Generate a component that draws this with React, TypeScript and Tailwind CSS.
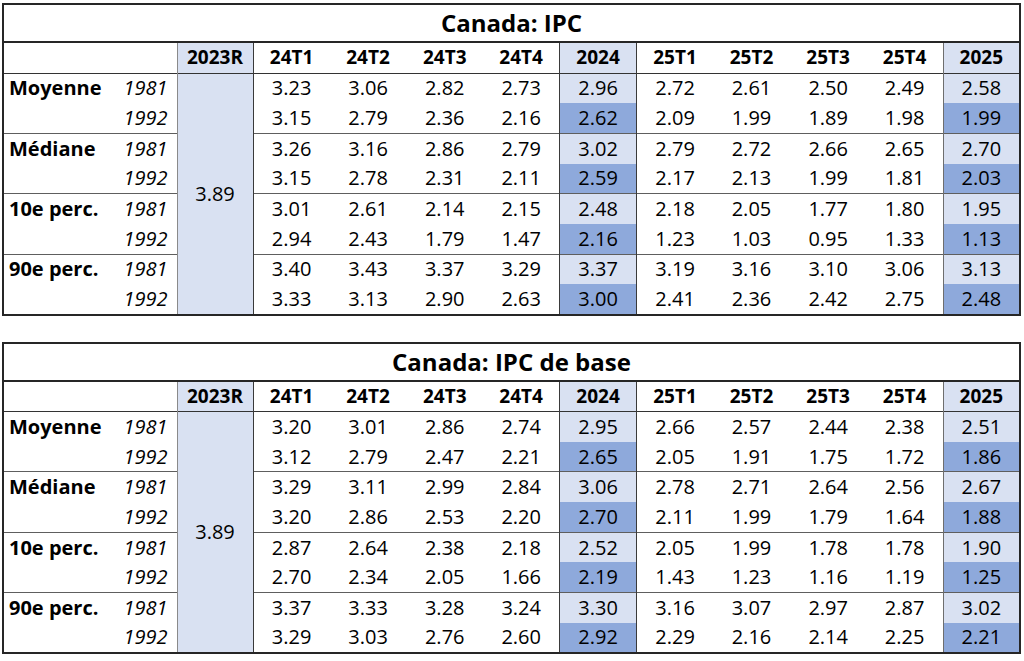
const cols = ["24T1", "24T2", "24T3", "24T4", "2024", "25T1", "25T2", "25T3", "25T4", "2025"];

type Group = { label: string; r1981: string[]; r1992: string[] };

const tables: { title: string; base: string; groups: Group[] }[] = [
  {
    title: "Canada: IPC",
    base: "3.89",
    groups: [
      {
        label: "Moyenne",
        r1981: ["3.23", "3.06", "2.82", "2.73", "2.96", "2.72", "2.61", "2.50", "2.49", "2.58"],
        r1992: ["3.15", "2.79", "2.36", "2.16", "2.62", "2.09", "1.99", "1.89", "1.98", "1.99"],
      },
      {
        label: "Médiane",
        r1981: ["3.26", "3.16", "2.86", "2.79", "3.02", "2.79", "2.72", "2.66", "2.65", "2.70"],
        r1992: ["3.15", "2.78", "2.31", "2.11", "2.59", "2.17", "2.13", "1.99", "1.81", "2.03"],
      },
      {
        label: "10e perc.",
        r1981: ["3.01", "2.61", "2.14", "2.15", "2.48", "2.18", "2.05", "1.77", "1.80", "1.95"],
        r1992: ["2.94", "2.43", "1.79", "1.47", "2.16", "1.23", "1.03", "0.95", "1.33", "1.13"],
      },
      {
        label: "90e perc.",
        r1981: ["3.40", "3.43", "3.37", "3.29", "3.37", "3.19", "3.16", "3.10", "3.06", "3.13"],
        r1992: ["3.33", "3.13", "2.90", "2.63", "3.00", "2.41", "2.36", "2.42", "2.75", "2.48"],
      },
    ],
  },
  {
    title: "Canada: IPC de base",
    base: "3.89",
    groups: [
      {
        label: "Moyenne",
        r1981: ["3.20", "3.01", "2.86", "2.74", "2.95", "2.66", "2.57", "2.44", "2.38", "2.51"],
        r1992: ["3.12", "2.79", "2.47", "2.21", "2.65", "2.05", "1.91", "1.75", "1.72", "1.86"],
      },
      {
        label: "Médiane",
        r1981: ["3.29", "3.11", "2.99", "2.84", "3.06", "2.78", "2.71", "2.64", "2.56", "2.67"],
        r1992: ["3.20", "2.86", "2.53", "2.20", "2.70", "2.11", "1.99", "1.79", "1.64", "1.88"],
      },
      {
        label: "10e perc.",
        r1981: ["2.87", "2.64", "2.38", "2.18", "2.52", "2.05", "1.99", "1.78", "1.78", "1.90"],
        r1992: ["2.70", "2.34", "2.05", "1.66", "2.19", "1.43", "1.23", "1.16", "1.19", "1.25"],
      },
      {
        label: "90e perc.",
        r1981: ["3.37", "3.33", "3.28", "3.24", "3.30", "3.16", "3.07", "2.97", "2.87", "3.02"],
        r1992: ["3.29", "3.03", "2.76", "2.60", "2.92", "2.29", "2.16", "2.14", "2.25", "2.21"],
      },
    ],
  },
];

// border classes for the ten data columns
const colBorder = (i: number) => {
  if (i === 4) return "border-l border-l-[#3a3a3a] border-r border-r-[#3a3a3a]";
  if (i === 9) return "border-l border-l-[#6e6e6e]";
  return "";
};

const isAnnual = (i: number) => i === 4 || i === 9;

const InflationTable = ({ title, base, groups }: { title: string; base: string; groups: Group[] }) => (
  <table className="table-fixed border-collapse w-[1017px] border-2 border-[#262626] text-black">
    <colgroup>
      <col className="w-[110px]" />
      <col className="w-[64px]" />
      <col className="w-[76px]" />
      {cols.map((c) => (
        <col key={c} className="w-[76.7px]" />
      ))}
    </colgroup>
    <tbody>
      <tr className="h-[38px]">
        <td colSpan={13} className="text-center font-bold text-[24px] leading-none border-b-2 border-b-[#262626]">
          {title}
        </td>
      </tr>
      <tr className="h-[31px] font-bold text-[19px] leading-none border-b border-b-[#333]">
        <td colSpan={2} className="border-r border-r-[#8a8a8a]"></td>
        <td className="text-center bg-[#d9e1f2] border-r border-r-[#3a3a3a]">2023R</td>
        {cols.map((c, i) => (
          <td key={c} className={`text-center ${isAnnual(i) ? "bg-[#d9e1f2]" : ""} ${colBorder(i)}`}>
            {c}
          </td>
        ))}
      </tr>
      {groups.map((g, gi) => (
        <>
          <tr
            key={`${g.label}-a`}
            className={`h-[30.2px] text-[20px] leading-none ${gi > 0 ? "border-t border-t-[#5e5e5e]" : ""}`}
          >
            <td className="font-bold pl-[5px] whitespace-nowrap">{g.label}</td>
            <td className="italic text-right pr-[9px] border-r border-r-[#8a8a8a]">1981</td>
            {gi === 0 && (
              <td rowSpan={8} className="text-center align-middle bg-[#d9e1f2] border-r border-r-[#3a3a3a]">
                {base}
              </td>
            )}
            {g.r1981.map((v, i) => (
              <td key={i} className={`text-center ${isAnnual(i) ? "bg-[#d9e1f2]" : ""} ${colBorder(i)}`}>
                {v}
              </td>
            ))}
          </tr>
          <tr key={`${g.label}-b`} className="h-[30.2px] text-[20px] leading-none">
            <td></td>
            <td className="italic text-right pr-[9px] border-r border-r-[#8a8a8a]">1992</td>
            {g.r1992.map((v, i) => (
              <td key={i} className={`text-center ${isAnnual(i) ? "bg-[#8ea9db]" : ""} ${colBorder(i)}`}>
                {v}
              </td>
            ))}
          </tr>
        </>
      ))}
    </tbody>
  </table>
);

export default function App() {
  return (
    <div className="w-[1024px] h-[661px] bg-white pl-[2px] pt-[3px] flex flex-col gap-[26px] font-['Open_Sans',sans-serif]">
      {tables.map((t) => (
        <InflationTable key={t.title} {...t} />
      ))}
    </div>
  );
}
